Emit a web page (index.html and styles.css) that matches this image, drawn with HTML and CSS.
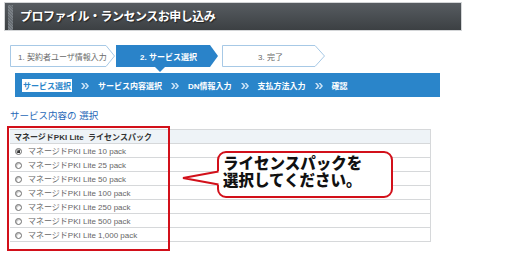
FILE: index.html
```html
<!DOCTYPE html>
<html lang="ja">
<head>
    <meta charset="UTF-8">
    <title>プロファイル・ランセンスお申し込み</title>
    <link rel="stylesheet" href="styles.css">
</head>
<body>
    <div class="page">
        <div class="title-bar">
            <span class="stripe"></span>
            <h1>プロファイル・ランセンスお申し込み</h1>
        </div>

        <div class="steps">
            <div class="step">
                <svg class="step-shape" width="105" height="22"><polygon points="0.5,0.5 96,0.5 104.5,11 96,21.5 0.5,21.5" fill="#fff" stroke="#a7c9e6"/></svg>
                <span>1. 契約者ユーザ情報入力</span>
            </div>
            <div class="step current">
                <svg class="step-shape" width="105" height="28"><polygon points="0,0 94,0 102,11 94,22 0,22" fill="#2a83c9"/><polygon points="39,22 49,22 44,27" fill="#2a83c9"/></svg>
                <span>2. サービス選択</span>
            </div>
            <div class="step last">
                <svg class="step-shape" width="105" height="22"><polygon points="0.5,0.5 93,0.5 102.5,11 93,21.5 0.5,21.5" fill="#fff" stroke="#a7c9e6"/></svg>
                <span>3. 完了</span>
            </div>
        </div>

        <div class="subnav">
            <span class="active">サービス選択</span>
            <svg class="sep" width="8" height="6"><polygon points="0,0 2,0 4.5,3 2,6 0,6 2.5,3" /><polygon points="3.5,0 5.5,0 8,3 5.5,6 3.5,6 6,3" /></svg>
            <span>サービス内容選択</span>
            <svg class="sep" width="8" height="6"><polygon points="0,0 2,0 4.5,3 2,6 0,6 2.5,3" /><polygon points="3.5,0 5.5,0 8,3 5.5,6 3.5,6 6,3" /></svg>
            <span>DN情報入力</span>
            <svg class="sep" width="8" height="6"><polygon points="0,0 2,0 4.5,3 2,6 0,6 2.5,3" /><polygon points="3.5,0 5.5,0 8,3 5.5,6 3.5,6 6,3" /></svg>
            <span>支払方法入力</span>
            <svg class="sep" width="8" height="6"><polygon points="0,0 2,0 4.5,3 2,6 0,6 2.5,3" /><polygon points="3.5,0 5.5,0 8,3 5.5,6 3.5,6 6,3" /></svg>
            <span>確認</span>
        </div>

        <h2 class="section-title">サービス内容の 選択</h2>

        <div class="table-area">
            <table class="packs">
                <tr><th>マネージドPKI Lite&nbsp;&nbsp;ライセンスパック</th></tr>
                <tr><td><span class="radio checked"></span>マネージドPKI Lite 10 pack</td></tr>
                <tr><td><span class="radio"></span>マネージドPKI Lite 25 pack</td></tr>
                <tr><td><span class="radio"></span>マネージドPKI Lite 50 pack</td></tr>
                <tr><td><span class="radio"></span>マネージドPKI Lite 100 pack</td></tr>
                <tr><td><span class="radio"></span>マネージドPKI Lite 250 pack</td></tr>
                <tr><td><span class="radio"></span>マネージドPKI Lite 500 pack</td></tr>
                <tr><td><span class="radio"></span>マネージドPKI Lite 1,000 pack</td></tr>
            </table>

            <div class="highlight"></div>

            <div class="callout">ライセンスパックを<br>選択してください。</div>
            <svg class="callout-tail" width="38" height="20"><polygon points="37,2 1,9 37,16" fill="#fff"/><polyline points="36.5,2.5 1,9 36.5,15.5" fill="none" stroke="#d2101a" stroke-width="2"/></svg>
        </div>
    </div>
</body>
</html>
```

FILE: styles.css
```css
* {
    margin: 0;
    padding: 0;
    box-sizing: border-box;
}

body {
    background-color: #fff;
    font-family: 'Liberation Sans', 'Noto Sans CJK JP', sans-serif;
    width: 531px;
    height: 256px;
    overflow: hidden;
}

.page {
    padding-top: 2px;
}

.title-bar {
    margin-left: 4px;
    width: 458px;
    height: 29px;
    border: 1px solid #d4d6d8;
    background: linear-gradient(#575c61, #3c4043);
    display: flex;
    align-items: center;
}

.stripe {
    width: 5px;
    height: 25px;
    margin-left: 3px;
    margin-top: 2px;
    background: repeating-linear-gradient(45deg, #7b8187 0 1px, #676d72 1px 2px);
}

.title-bar h1 {
    margin-left: 7px;
    margin-top: -3px;
    font-size: 12px;
    font-weight: bold;
    color: #fff;
    letter-spacing: -0.5px;
    text-shadow: 1px 1px 1px #222;
}

.steps {
    display: flex;
    gap: 1px;
    margin-top: 14px;
    margin-left: 10px;
    height: 22px;
}

.step {
    position: relative;
    width: 105px;
    height: 22px;
    display: flex;
    align-items: center;
    font-size: 8px;
    color: #6a6a6a;
    padding-left: 8px;
}

.step-shape {
    position: absolute;
    left: 0;
    top: 0;
    overflow: visible;
}

.step span {
    position: relative;
}

.step.current {
    color: #fff;
    font-weight: bold;
    padding-left: 24px;
}

.step.last {
    padding-left: 36px;
}

.subnav {
    margin-top: 6px;
    margin-left: 15px;
    width: 425px;
    height: 24px;
    background-color: #2a85ca;
    display: flex;
    align-items: center;
    padding-left: 7px;
    gap: 9px;
    font-size: 8px;
    font-weight: bold;
    color: #fff;
}

.subnav .active {
    background-color: #fff;
    color: #2a85ca;
    padding: 1px 1px;
    margin-top: 1px;
}

.subnav .sep {
    fill: #c9e1f5;
    flex-shrink: 0;
    margin-top: 1px;
}

.section-title {
    margin-top: 13px;
    margin-left: 10px;
    font-size: 9.5px;
    line-height: 12px;
    font-weight: normal;
    color: #1f68b8;
}

.table-area {
    position: relative;
    margin-top: 7px;
    padding-left: 10px;
    height: 130px;
}

.packs {
    width: 421px;
    border-collapse: collapse;
    border-right: 1px solid #d6d8da;
}

.packs th {
    height: 14px;
    background-color: #eef3f7;
    border-top: 1px solid #d6d8da;
    border-bottom: 1px solid #d6d8da;
    text-align: left;
    padding-left: 4px;
    font-size: 8px;
    font-weight: bold;
    color: #333;
}

.packs td {
    height: 14px;
    border-bottom: 1px solid #d6d8da;
    padding-left: 5px;
    font-size: 8px;
    color: #666;
}

.radio {
    display: inline-block;
    width: 7px;
    height: 7px;
    border: 1px solid #6f6f6f;
    border-radius: 50%;
    margin-right: 6px;
    vertical-align: -1px;
    box-shadow: inset 1px 1px 1px #bbb;
}

.radio.checked {
    background: radial-gradient(circle, #333 0 1.5px, #fff 2px);
}

.highlight {
    position: absolute;
    left: 7px;
    top: -3px;
    width: 163px;
    height: 125px;
    border: 2px solid #d2101a;
}

.callout {
    position: absolute;
    left: 217px;
    top: 22px;
    width: 176px;
    height: 47px;
    border: 2px solid #d2101a;
    border-radius: 9px;
    background-color: #fff;
    padding: 2px 0 0 4px;
    font-size: 15.5px;
    line-height: 17px;
    font-weight: 900;
    color: #111;
}

.callout-tail {
    position: absolute;
    left: 182px;
    top: 40px;
}
```
